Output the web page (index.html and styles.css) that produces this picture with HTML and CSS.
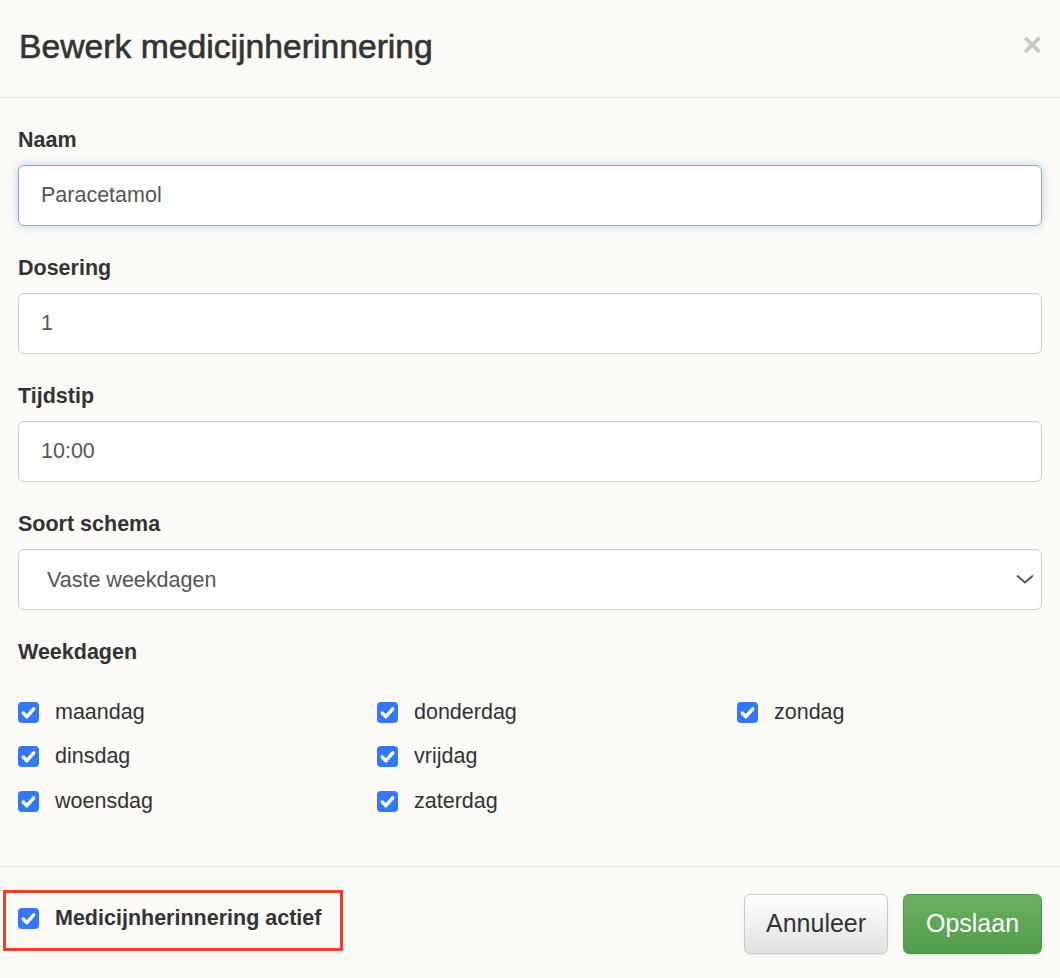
FILE: index.html
```html
<!DOCTYPE html>
<html lang="nl">
<head>
<meta charset="utf-8">
<title>Bewerk medicijnherinnering</title>
<link rel="stylesheet" href="styles.css">
</head>
<body>
<div class="modal">
  <header class="modal-header">
    <h1 class="modal-title">Bewerk medicijnherinnering</h1>
    <button class="close" type="button" aria-label="Sluiten">×</button>
  </header>

  <div class="modal-body">
    <div class="form-group">
      <label class="label" for="naam">Naam</label>
      <input class="input focused" id="naam" type="text" value="Paracetamol">
    </div>
    <div class="form-group">
      <label class="label" for="dosering">Dosering</label>
      <input class="input" id="dosering" type="text" value="1">
    </div>
    <div class="form-group">
      <label class="label" for="tijdstip">Tijdstip</label>
      <input class="input" id="tijdstip" type="text" value="10:00">
    </div>
    <div class="form-group">
      <label class="label" for="schema">Soort schema</label>
      <div class="select-wrap">
        <select class="input select" id="schema">
          <option>Vaste weekdagen</option>
        </select>
        <svg class="chevron" width="18" height="10" viewBox="0 0 18 10"><path d="M1 1.5 L9 8.5 L17 1.5" fill="none" stroke="#555" stroke-width="1.8"/></svg>
      </div>
    </div>

    <div class="label days-title">Weekdagen</div>
    <div class="days">
      <label class="check"><span class="box"><svg viewBox="0 0 20 20"><path d="M5 10.5 L8.5 14 L15 6.5" fill="none" stroke="#fff" stroke-width="3.2" stroke-linecap="round" stroke-linejoin="round"/></svg></span>maandag</label>
      <label class="check"><span class="box"><svg viewBox="0 0 20 20"><path d="M5 10.5 L8.5 14 L15 6.5" fill="none" stroke="#fff" stroke-width="3.2" stroke-linecap="round" stroke-linejoin="round"/></svg></span>donderdag</label>
      <label class="check"><span class="box"><svg viewBox="0 0 20 20"><path d="M5 10.5 L8.5 14 L15 6.5" fill="none" stroke="#fff" stroke-width="3.2" stroke-linecap="round" stroke-linejoin="round"/></svg></span>zondag</label>
      <label class="check"><span class="box"><svg viewBox="0 0 20 20"><path d="M5 10.5 L8.5 14 L15 6.5" fill="none" stroke="#fff" stroke-width="3.2" stroke-linecap="round" stroke-linejoin="round"/></svg></span>dinsdag</label>
      <label class="check"><span class="box"><svg viewBox="0 0 20 20"><path d="M5 10.5 L8.5 14 L15 6.5" fill="none" stroke="#fff" stroke-width="3.2" stroke-linecap="round" stroke-linejoin="round"/></svg></span>vrijdag</label>
      <span></span>
      <label class="check"><span class="box"><svg viewBox="0 0 20 20"><path d="M5 10.5 L8.5 14 L15 6.5" fill="none" stroke="#fff" stroke-width="3.2" stroke-linecap="round" stroke-linejoin="round"/></svg></span>woensdag</label>
      <label class="check"><span class="box"><svg viewBox="0 0 20 20"><path d="M5 10.5 L8.5 14 L15 6.5" fill="none" stroke="#fff" stroke-width="3.2" stroke-linecap="round" stroke-linejoin="round"/></svg></span>zaterdag</label>
    </div>
  </div>

  <footer class="modal-footer">
    <div class="highlight">
      <label class="check strong"><span class="box"><svg viewBox="0 0 20 20"><path d="M5 10.5 L8.5 14 L15 6.5" fill="none" stroke="#fff" stroke-width="3.2" stroke-linecap="round" stroke-linejoin="round"/></svg></span>Medicijnherinnering actief</label>
    </div>
    <div class="actions">
      <button class="btn btn-default" type="button">Annuleer</button>
      <button class="btn btn-success" type="button">Opslaan</button>
    </div>
  </footer>
</div>
</body>
</html>
```

FILE: styles.css
```css
* { box-sizing: border-box; }

html, body {
  margin: 0;
  padding: 0;
  background: #fbfaf7;
}

body {
  font-family: "Liberation Sans", Arial, sans-serif;
  color: #333;
  width: 1060px;
  height: 978px;
  overflow: hidden;
}

.modal {
  display: flex;
  flex-direction: column;
}

/* header */
.modal-header {
  height: 98px;
  border-bottom: 1px solid #e5e5e2;
  display: flex;
  align-items: center;
  justify-content: space-between;
  padding: 0 18px 0 19px;
}

.modal-title {
  margin: 0;
  margin-top: -4px;
  font-size: 33.7px;
  font-weight: 400;
  -webkit-text-stroke: 0.6px #333;
  color: #333;
  letter-spacing: 0;
}

.close {
  border: 0;
  background: none;
  padding: 0;
  margin-top: -10px;
  font-family: "Liberation Sans", Arial, sans-serif;
  font-size: 34px;
  font-weight: 700;
  line-height: 1;
  color: #c9c9c7;
  cursor: pointer;
}

/* body */
.modal-body {
  padding: 30px 18px 0 18px;
}

.form-group {
  margin-bottom: 30px;
}

.label {
  display: block;
  font-size: 21.5px;
  font-weight: 700;
  line-height: 24px;
  color: #333;
  margin-bottom: 13px;
}

.input {
  display: block;
  width: 100%;
  height: 61px;
  border: 1px solid #cccccb;
  border-radius: 6px;
  background: #fff;
  padding: 0 22px;
  font-family: "Liberation Sans", Arial, sans-serif;
  font-size: 21.5px;
  color: #555;
  box-shadow: inset 0 1px 1px rgba(0, 0, 0, 0.04);
  outline: none;
}

.input.focused {
  border-color: #82aee6;
  box-shadow: inset 0 1px 1px rgba(0, 0, 0, 0.05), 0 0 8px rgba(102, 160, 233, 0.45);
}

.select-wrap {
  position: relative;
}

.select {
  -webkit-appearance: none;
  appearance: none;
  padding-left: 28px;
}

.chevron {
  position: absolute;
  right: 8px;
  top: 25px;
}

.days-title {
  margin-bottom: 26px;
}

.days {
  display: grid;
  grid-template-columns: 359px 360px 1fr;
  grid-auto-rows: 44.5px;
  padding-bottom: 42px;
}

.check {
  display: flex;
  align-items: center;
  font-size: 21.5px;
  color: #333;
  height: 44px;
}

.box {
  width: 21px;
  height: 21px;
  border-radius: 4px;
  background: #3478f6;
  margin-right: 16px;
  flex: none;
  display: flex;
  align-items: center;
  justify-content: center;
}

.box svg {
  width: 21px;
  height: 21px;
}

/* footer */
.modal-footer {
  border-top: 1px solid #e5e5e2;
  display: flex;
  justify-content: space-between;
  align-items: flex-start;
  padding: 23px 18px 0 18px;
}

.highlight {
  margin-left: -15px;
  border: 3px solid #e8412c;
  padding: 0 19px 0 12px;
  height: 61px;
  display: flex;
  align-items: center;
}

.check.strong {
  font-weight: 700;
  margin-top: -4px;
}

.actions {
  display: flex;
  gap: 15px;
  margin-top: 4px;
}

.btn {
  height: 60px;
  border-radius: 6px;
  font-family: "Liberation Sans", Arial, sans-serif;
  font-size: 25px;
  padding: 0 21px;
  cursor: pointer;
}

.btn-default {
  width: 144px;
  color: #333;
  background: linear-gradient(#ffffff, #e1e1e1);
  border: 1px solid #cacaca;
  box-shadow: 0 1px 2px rgba(0, 0, 0, 0.08);
}

.btn-success {
  width: 139px;
  color: #fff;
  background: linear-gradient(#6bb163, #519c4a);
  border: 1px solid #4f9748;
  box-shadow: 0 1px 2px rgba(0, 0, 0, 0.1);
}
```
